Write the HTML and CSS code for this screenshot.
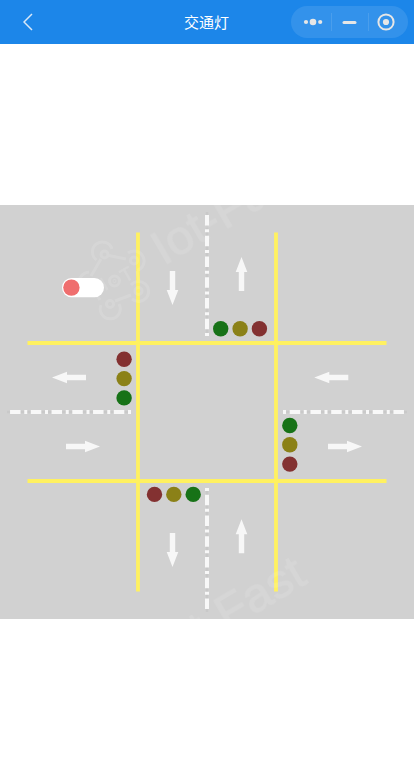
FILE: index.html
```html
<!DOCTYPE html>
<html lang="zh-CN">
<head>
<meta charset="UTF-8">
<title>交通灯</title>
<link rel="stylesheet" href="styles.css">
</head>
<body>
<header class="bar">
  <svg class="back" viewBox="0 0 10 18"><path d="M9 1 1 9l8 8"/></svg>
  <h1 class="title">交通灯</h1>
  <div class="capsule">
    <svg viewBox="0 0 117 32" width="117" height="32">
      <g class="separator"><path d="M40.5 7v18M77.500 7v18"/></g>
      <g class="glyph"><circle cx="15" cy="16" r="2.100"/><circle cx="22" cy="16" r="3.300"/><circle cx="29.200" cy="16" r="2.100"/><rect x="51.500" y="15" width="14" height="3" rx="1.500"/><circle cx="95" cy="16" r="3.100"/></g>
      <circle class="ring" cx="95" cy="16" r="7.600"/>
    </svg>
  </div>
</header>
<main class="stage">
  <svg class="scene" viewBox="0 205 414 414">
    <defs>
      <path id="arrow" d="M0-17 5.800-2H2.700V17h-5.400V-2H-5.800z"/>
      <g id="divider"><path class="gap" d="M0 0v124"/><path class="dash" d="M0 0v121"/></g>
    </defs>
    <g class="curb"><path d="M138 232.500v359M276 232.500v359M27.500 343h359M27.500 481h359"/></g>
    <use href="#divider" transform="translate(207 336) rotate(180)"/>
    <use href="#divider" transform="translate(207 488)"/>
    <use href="#divider" transform="translate(131 412) rotate(90)"/>
    <use href="#divider" transform="translate(283 412) rotate(-90)"/>
    <g class="arrows">
      <use href="#arrow" transform="translate(172.500 288) rotate(180)"/>
      <use href="#arrow" transform="translate(241.500 274)"/>
      <use href="#arrow" transform="translate(69 377.500) rotate(-90)"/>
      <use href="#arrow" transform="translate(83 446.500) rotate(90)"/>
      <use href="#arrow" transform="translate(331.300 377.500) rotate(-90)"/>
      <use href="#arrow" transform="translate(345 446.500) rotate(90)"/>
      <use href="#arrow" transform="translate(172.500 550) rotate(180)"/>
      <use href="#arrow" transform="translate(241.500 536.200)"/>
    </g>
    <g class="green"><circle cx="220.700" cy="328.800" r="7.700"/><circle cx="124.100" cy="397.900" r="7.700"/><circle cx="289.800" cy="425.500" r="7.700"/><circle cx="193.200" cy="494.400" r="7.700"/></g>
    <g class="amber"><circle cx="240.100" cy="328.800" r="7.700"/><circle cx="124.100" cy="378.600" r="7.700"/><circle cx="289.800" cy="444.800" r="7.700"/><circle cx="173.800" cy="494.400" r="7.700"/></g>
    <g class="red"><circle cx="259.400" cy="328.800" r="7.700"/><circle cx="124.100" cy="359.300" r="7.700"/><circle cx="289.800" cy="464.100" r="7.700"/><circle cx="154.500" cy="494.400" r="7.700"/></g>
    <g class="watermark">
      <g class="logo">
        <path d="M96.500 260a10 10 0 1 1 15.500-11M109 255.500l17 3.500M128 253a10 10 0 1 1 9 17.500M137 271l2 11M131 285a10 10 0 1 1 1 14M101 305a10 10 0 1 0 18-1M101 259l-10 17M79 281q2-8 10-9M94 291l6 9M115 301l16-6"/>
        <circle cx="104.500" cy="254.500" r="3.500"/><circle cx="134" cy="260.500" r="3.500"/><circle cx="138.500" cy="291" r="3.500"/><circle cx="110" cy="304" r="3.500"/>
        <circle cx="114.500" cy="281" r="5"/><circle cx="114.500" cy="281" r=".5"/>
      </g>
      <text class="iot" transform="translate(105 291) rotate(-30)">I</text>
      <text class="iot" transform="translate(125 283) rotate(-30)">T</text>
      <text class="brand" transform="translate(163.500 266) rotate(-30.500)">Iot-Fast</text>
      <text class="brand" transform="translate(166 667) rotate(-30.500)">Iot-Fast</text>
    </g>
    <rect class="track" x="62" y="278" width="42" height="19.300" rx="9.650"/>
    <circle class="knob" cx="71.400" cy="287.600" r="8.200"/>
  </svg>
</main>
</body>
</html>
```
FILE: styles.css
```css
* { box-sizing: border-box; }
body { margin: 0; height: 780px; background: #fff; display: flex; flex-direction: column; overflow: hidden; font-family: "Liberation Sans", "Noto Sans CJK SC", sans-serif; }
.bar { height: 44px; flex: none; display: grid; grid-template-columns: 123px 1fr 123px; align-items: center; background: #1c86e9; }
.back { width: 10px; height: 18px; margin-left: 22.5px; fill: none; stroke: #d9e8f7; stroke-width: 1.500; }
.title { margin: 0; padding: 1px 1px 0 0; color: #fff; font-size: 15px; line-height: 22px; font-weight: 400; text-align: center; }
.capsule { width: 117px; height: 32px; border-radius: 16px; background: #3392eb; }
.capsule svg { display: block; }
.separator { fill: none; stroke: #4a9eec; stroke-width: 1; }
.glyph { fill: #e6e6e6; }
.ring { fill: none; stroke: #e6e6e6; stroke-width: 2; }
.stage { margin-top: 161px; height: 414px; background: #d1d1d1; }
.scene { display: block; width: 414px; height: 414px; }
.curb { fill: none; stroke: #fff160; stroke-width: 3.800; }
.gap { fill: none; stroke: #c9c9c9; stroke-width: 2.500; }
.dash { fill: none; stroke: #f8f8f8; stroke-width: 4; stroke-dasharray: 3 3.700 10.500 3.550; }
.arrows { fill: #f7f7f7; }
.green { fill: #177217; }
.amber { fill: #8b8117; }
.red { fill: #833131; }
.watermark { fill: #fff; opacity: .12; }
.logo { fill: none; stroke: #fff; stroke-width: 3; }
.iot { font-size: 19px; stroke: #fff; stroke-width: .6; }
.brand { font-size: 49px; stroke: #fff; stroke-width: .8; }
.track { fill: #fff; }
.knob { fill: #ef6e6e; }
```
